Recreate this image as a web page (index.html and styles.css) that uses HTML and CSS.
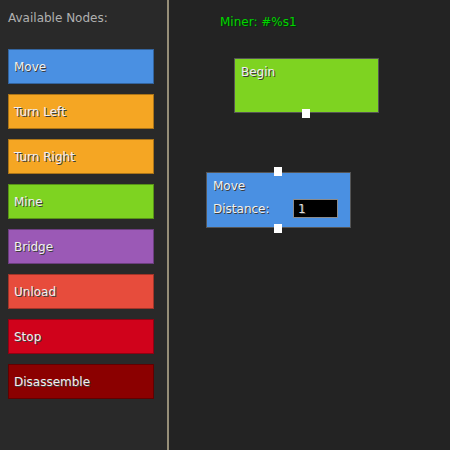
FILE: index.html
```html
<!DOCTYPE html>
<html lang="en">
<head>
    <meta charset="UTF-8">
    <title>Miner Program Editor</title>
    <link rel="stylesheet" href="styles.css">
</head>
<body>
    <div class="editor">
        <!-- node palette -->
        <div class="palette">
            <div class="palette-title">Available Nodes:</div>
            <div class="node-list">
                <div class="node-btn move">Move</div>
                <div class="node-btn turn">Turn Left</div>
                <div class="node-btn turn">Turn Right</div>
                <div class="node-btn mine">Mine</div>
                <div class="node-btn bridge">Bridge</div>
                <div class="node-btn unload">Unload</div>
                <div class="node-btn stop">Stop</div>
                <div class="node-btn disassemble">Disassemble</div>
            </div>
        </div>
        <div class="divider"></div>
        <!-- program canvas -->
        <div class="canvas">
            <div class="miner-name">Miner: #%s1</div>

            <div class="node mine begin-node">
                <div class="node-label">Begin</div>
                <span class="port port-out"></span>
            </div>

            <div class="node move move-node">
                <span class="port port-in"></span>
                <div class="node-label">Move</div>
                <div class="node-field">
                    <span>Distance:</span>
                    <input class="field-input" type="text" value="1">
                </div>
                <span class="port port-out"></span>
            </div>
        </div>
    </div>
</body>
</html>
```

FILE: styles.css
```css
body {
    margin: 0;
    padding: 0;
    background: #232323;
    font-family: "DejaVu Sans", "Liberation Sans", sans-serif;
    font-size: 12px;
    color: #e6e6e6;
}
.editor {
    display: flex;
    width: 450px;
    height: 450px;
    overflow: hidden;
}

/* left palette */
.palette {
    width: 167px;
    background: #292929;
    padding: 10px 0 0 8px;
    box-sizing: border-box;
}
.palette-title {
    color: #b0b0b0;
    text-shadow: 1px 1px 0 #2c2c2c;
    height: 16px;
    line-height: 16px;
}
.node-list {
    margin-top: 23px;
    display: flex;
    flex-direction: column;
    gap: 10px;
}
.node-btn {
    width: 146px;
    height: 35px;
    box-sizing: border-box;
    border: 1px solid rgba(0, 0, 0, 0.3);
    padding: 0 5px;
    display: flex;
    align-items: center;
    color: #f0f0f0;
    text-shadow: 1px 1px 0 #3c3c3c;
}

.move { background: #4a90e2; }
.turn { background: #f5a623; }
.mine { background: #7ed321; }
.bridge { background: #9b59b6; }
.unload { background: #e74c3c; }
.stop { background: #d0021b; }
.disassemble { background: #8b0000; }

.divider {
    width: 2px;
    background: #968e78;
    flex: none;
}

/* program canvas */
.canvas {
    flex: 1;
    position: relative;
    background: #232323;
}
.miner-name {
    position: absolute;
    left: 51px;
    top: 15px;
    color: #00d400;
    text-shadow: 1px 1px 0 #003500;
}
.node {
    position: absolute;
    width: 145px;
    box-sizing: border-box;
    border: 1px solid #555;
    padding: 4px 6px;
    color: #f0f0f0;
    text-shadow: 1px 1px 0 #3c3c3c;
}
.begin-node {
    left: 65px;
    top: 58px;
    height: 55px;
}
.move-node {
    left: 37px;
    top: 172px;
    height: 56px;
}
.node-label {
    line-height: 18px;
}
.node-field {
    display: flex;
    align-items: center;
    justify-content: space-between;
    margin-top: 4px;
}
.field-input {
    width: 45px;
    height: 19px;
    box-sizing: border-box;
    background: #000;
    border: 1px solid #8a8a8a;
    color: #e0e0e0;
    font: inherit;
    padding: 0 4px;
    margin-right: 6px;
    text-shadow: 1px 1px 0 #3c3c3c;
}
.port {
    position: absolute;
    left: 67px;
    width: 8px;
    height: 9px;
    background: #fff;
}
.port-in { top: -6px; }
.port-out { bottom: -6px; }
```
